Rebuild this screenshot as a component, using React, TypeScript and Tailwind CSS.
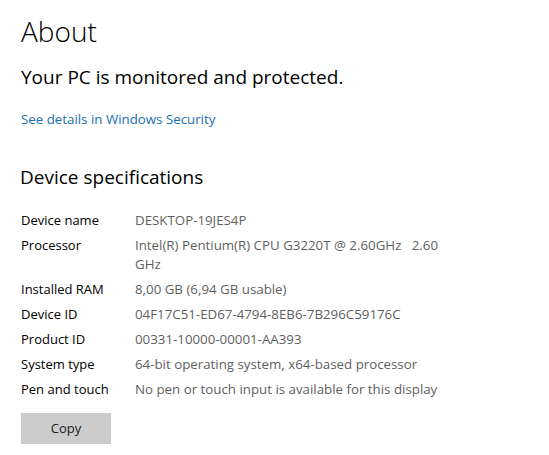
const specs: [string, React.ReactNode][] = [
  ["Device name", "DESKTOP-19JES4P"],
  [
    "Processor",
    <>
      Intel(R) Pentium(R) CPU G3220T @ 2.60GHz&nbsp;&nbsp;&nbsp;2.60
      <br />
      GHz
    </>,
  ],
  ["Installed RAM", "8,00 GB (6,94 GB usable)"],
  ["Device ID", "04F17C51-ED67-4794-8EB6-7B296C59176C"],
  ["Product ID", "00331-10000-00001-AA393"],
  ["System type", "64-bit operating system, x64-based processor"],
  ["Pen and touch", "No pen or touch input is available for this display"],
];

export default function App() {
  return (
    <div className="w-[549px] h-[455px] bg-white overflow-hidden font-['Open_Sans',sans-serif] text-black">
      <div className="pl-[21px] pt-[12px]">
        <h1 className="text-[28px] font-light leading-[38px]">About</h1>
        <p className="mt-[14px] text-[19px] leading-[26px]">Your PC is monitored and protected.</p>
        <a className="block mt-[20px] text-[13.3px] leading-[18px] text-[#1a6fb0]">See details in Windows Security</a>
        <h2 className="mt-[36px] text-[19px] leading-[26px] -ml-px">Device specifications</h2>
        <div className="mt-[21px] flex flex-col gap-[6px] text-[13px] leading-[19px]">
          {specs.map(([label, value]) => (
            <div key={label} className="flex">
              <div className="w-[114px] shrink-0">{label}</div>
              <div className="text-[13.3px] text-[#5f5f5f]">{value}</div>
            </div>
          ))}
        </div>
        <button className="mt-[14px] w-[90px] h-[31px] bg-[#cccccc] text-[13px] text-[#1a1a1a]">Copy</button>
      </div>
    </div>
  );
}
